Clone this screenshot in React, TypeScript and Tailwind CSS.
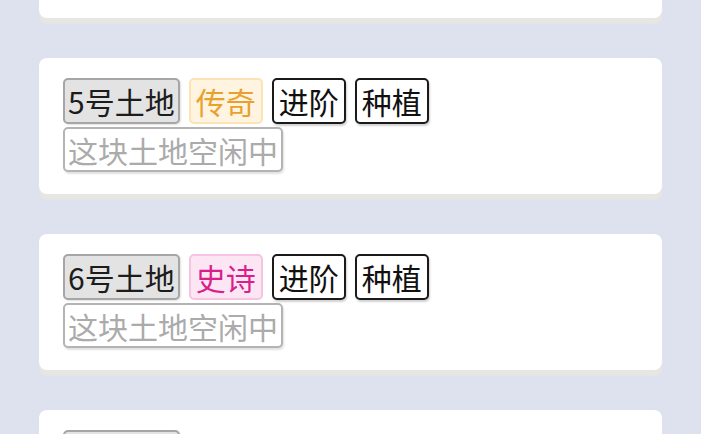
import React from 'react';

type Rarity = 'legend' | 'epic' | 'rare';

interface Plot {
  id: number;
  rarity?: Rarity;
  unlocked: boolean;
}

const plots: Plot[] = [
  { id: 4, rarity: 'rare', unlocked: true },
  { id: 5, rarity: 'legend', unlocked: true },
  { id: 6, rarity: 'epic', unlocked: true },
  { id: 7, unlocked: false },
];

const rarityLabel: Record<Rarity, string> = {
  legend: '传奇',
  epic: '史诗',
  rare: '稀有',
};

const rarityClass: Record<Rarity, string> = {
  legend: 'bg-[#fff4df] border-[#fbe3b5] text-[#e9a02c]',
  epic: 'bg-[#fde6f4] border-[#f6c4e3] text-[#d81f8c]',
  rare: 'bg-[#e6f0ff] border-[#bcd4f7] text-[#2f6fd6]',
};

const chip = 'flex items-center rounded-[5px] border-2 leading-none text-[30px]';

function PlotCard({ plot }: { plot: Plot }) {
  return (
    <div className="h-[136px] shrink-0 bg-white rounded-[8px] pt-[20px] pl-[24px] pr-6 shadow-[0_6px_2px_#e6e6e2]">
      <div className="flex items-center gap-[9px]">
        <div className={`${chip} h-[46px] px-[3px] bg-[#e3e3e3] border-[#a6a6a6] text-[#1c1c1c] shadow-[1px_1px_2px_rgba(0,0,0,0.12)]`}>
          {plot.id}号土地
        </div>
        {plot.rarity && (
          <div className={`${chip} h-[46px] px-[5px] ${rarityClass[plot.rarity]}`}>{rarityLabel[plot.rarity]}</div>
        )}
        {plot.unlocked && (
          <>
            <button className={`${chip} h-[46px] px-[5px] bg-white border-[#1a1a1a] text-[#111] shadow-[1px_2px_2px_rgba(0,0,0,0.18)]`}>
              进阶
            </button>
            <button className={`${chip} h-[46px] px-[5px] bg-white border-[#1a1a1a] text-[#111] shadow-[1px_2px_2px_rgba(0,0,0,0.18)]`}>
              种植
            </button>
          </>
        )}
      </div>
      <div className="flex mt-[3px]">
        <div className={`${chip} h-[45px] px-[3px] bg-white border-[#b4b4b4] text-[#ababab] shadow-[1px_2px_2px_rgba(0,0,0,0.12)]`}>
          这块土地空闲中
        </div>
      </div>
    </div>
  );
}

export default function App() {
  return (
    <div
      className="h-screen overflow-hidden bg-[#dee1ee]"
      style={{ fontFamily: '"Noto Sans CJK SC", "Noto Sans", sans-serif' }}
    >
      <div className="-mt-[118px] px-[39px] flex flex-col gap-[40px]">
        {plots.map((p) => (
          <PlotCard key={p.id} plot={p} />
        ))}
      </div>
    </div>
  );
}
